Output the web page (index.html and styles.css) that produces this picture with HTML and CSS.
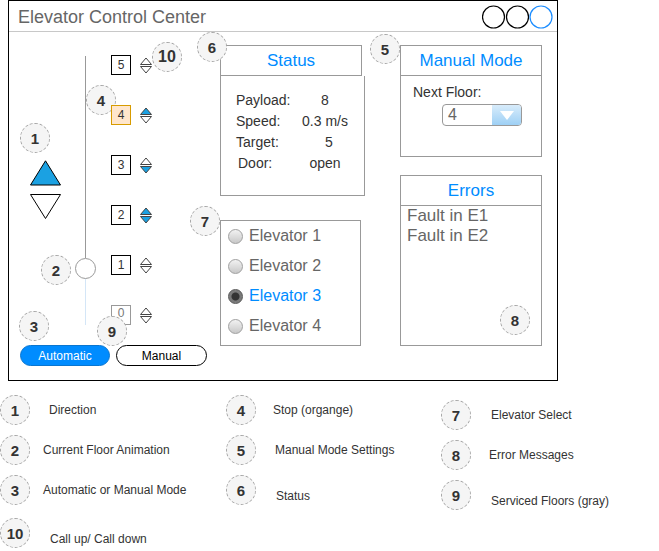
FILE: index.html
```html
<!DOCTYPE html>
<html>
<head>
<meta charset="utf-8">
<link rel="stylesheet" href="styles.css">
</head>
<body>
<div class="window">
  <div class="titlebar">
    <span class="title">Elevator Control Center</span>
    <svg class="winbtns" width="72" height="26" viewBox="0 0 72 26">
      <circle cx="11.5" cy="13" r="11" fill="none" stroke="#000" stroke-width="1.2"/>
      <circle cx="35.5" cy="13" r="11" fill="none" stroke="#000" stroke-width="1.2"/>
      <circle cx="59" cy="13" r="11" fill="none" stroke="#1a8cff" stroke-width="1.2"/>
    </svg>
  </div>
  <div class="content">
    <div class="left">
      <div class="cab">
        <div class="dir">
          <svg width="32" height="26" viewBox="0 0 32 26"><polygon points="15.5,0.8 30.5,25 0.5,25" fill="#1ba1e2" stroke="#000" stroke-width="1"/></svg>
          <svg width="32" height="26" viewBox="0 0 32 26"><polygon points="0.5,0.5 30.5,0.5 15.5,24.5" fill="#fff" stroke="#000" stroke-width="1"/></svg>
        </div>
        <div class="shaft">
          <div class="line-top"></div>
          <div class="pos"></div>
          <div class="line-bottom"></div>
        </div>
        <div class="floors">
          <div class="floor">
            <div class="fnum">5</div>
            <svg class="arr" width="12" height="17" viewBox="0 0 12 17"><polygon points="0.5,7.5 6,1 11.5,7.5" fill="#fff" stroke="#444"/><polygon points="0.5,9.5 11.5,9.5 6,16" fill="#fff" stroke="#444"/></svg>
          </div>
          <div class="floor">
            <div class="fnum stop">4</div>
            <svg class="arr" width="12" height="17" viewBox="0 0 12 17"><polygon points="0.5,7.5 6,1 11.5,7.5" fill="#1ba1e2" stroke="#444"/><polygon points="0.5,9.5 11.5,9.5 6,16" fill="#fff" stroke="#444"/></svg>
          </div>
          <div class="floor">
            <div class="fnum">3</div>
            <svg class="arr" width="12" height="17" viewBox="0 0 12 17"><polygon points="0.5,7.5 6,1 11.5,7.5" fill="#fff" stroke="#444"/><polygon points="0.5,9.5 11.5,9.5 6,16" fill="#1ba1e2" stroke="#444"/></svg>
          </div>
          <div class="floor">
            <div class="fnum">2</div>
            <svg class="arr" width="12" height="17" viewBox="0 0 12 17"><polygon points="0.5,7.5 6,1 11.5,7.5" fill="#1ba1e2" stroke="#444"/><polygon points="0.5,9.5 11.5,9.5 6,16" fill="#1ba1e2" stroke="#444"/></svg>
          </div>
          <div class="floor">
            <div class="fnum">1</div>
            <svg class="arr" width="12" height="17" viewBox="0 0 12 17"><polygon points="0.5,7.5 6,1 11.5,7.5" fill="#fff" stroke="#444"/><polygon points="0.5,9.5 11.5,9.5 6,16" fill="#fff" stroke="#444"/></svg>
          </div>
          <div class="floor">
            <div class="fnum gray">0</div>
            <svg class="arr" width="12" height="17" viewBox="0 0 12 17"><polygon points="0.5,7.5 6,1 11.5,7.5" fill="#fff" stroke="#444"/><polygon points="0.5,9.5 11.5,9.5 6,16" fill="#fff" stroke="#444"/></svg>
          </div>
        </div>
      </div>
      <div class="modes">
        <div class="btn auto">Automatic</div>
        <div class="btn manual">Manual</div>
      </div>
    </div>

    <div class="mid">
      <div class="panel-head">Status</div>
      <div class="status-body">
        <div class="srow"><span class="lbl">Payload:</span><span class="val">8</span></div>
        <div class="srow"><span class="lbl">Speed:</span><span class="val">0.3 m/s</span></div>
        <div class="srow"><span class="lbl">Target:</span><span class="val v-right">5</span></div>
        <div class="srow"><span class="lbl door">Door:</span><span class="val">open</span></div>
      </div>
      <div class="select">
        <div class="radio-row"><span class="radio"></span><span>Elevator 1</span></div>
        <div class="radio-row"><span class="radio"></span><span>Elevator 2</span></div>
        <div class="radio-row on"><span class="radio"></span><span>Elevator 3</span></div>
        <div class="radio-row"><span class="radio"></span><span>Elevator 4</span></div>
      </div>
    </div>

    <div class="right">
      <div class="panel-head">Manual Mode</div>
      <div class="manual-body">
        <div class="nf">Next Floor:</div>
        <div class="dropdown">
          <span class="dd-val">4</span>
          <span class="dd-btn"><svg width="14" height="9" viewBox="0 0 14 9"><polygon points="0,0 14,0 7,9" fill="#fff"/></svg></span>
        </div>
      </div>
      <div class="panel-head errors-head">Errors</div>
      <div class="errors-body">
        <div>Fault in E1</div>
        <div>Fault in E2</div>
      </div>
    </div>

    <div class="badge b1">1</div>
    <div class="badge b4">4</div>
    <div class="badge b10">10</div>
    <div class="badge b6">6</div>
    <div class="badge b5">5</div>
    <div class="badge b7">7</div>
    <div class="badge b2">2</div>
    <div class="badge b3">3</div>
    <div class="badge b9">9</div>
    <div class="badge b8">8</div>
  </div>
</div>

<div class="legend">
  <div class="lcol">
    <div class="litem"><span class="lbadge">1</span><span class="ltext g19">Direction</span></div>
    <div class="litem"><span class="lbadge">2</span><span class="ltext g13">Current Floor Animation</span></div>
    <div class="litem"><span class="lbadge">3</span><span class="ltext g13">Automatic or Manual Mode</span></div>
    <div class="litem r4"><span class="lbadge">10</span><span class="ltext g20 low">Call up/ Call down</span></div>
  </div>
  <div class="lcol">
    <div class="litem"><span class="lbadge">4</span><span class="ltext g17">Stop (organge)</span></div>
    <div class="litem"><span class="lbadge">5</span><span class="ltext g19">Manual Mode Settings</span></div>
    <div class="litem"><span class="lbadge">6</span><span class="ltext g20 low">Status</span></div>
  </div>
  <div class="lcol c3">
    <div class="litem"><span class="lbadge">7</span><span class="ltext g20">Elevator Select</span></div>
    <div class="litem"><span class="lbadge">8</span><span class="ltext g18">Error Messages</span></div>
    <div class="litem"><span class="lbadge">9</span><span class="ltext g20 low">Serviced Floors (gray)</span></div>
  </div>
</div>
</body>
</html>
```

FILE: styles.css
```css
html, body {
  margin: 0;
  padding: 0;
  background: #fff;
}

body {
  width: 659px;
  height: 551px;
  overflow: hidden;
  font-family: "Liberation Sans", Arial, sans-serif;
  color: #333;
}

.window {
  margin-left: 8px;
  width: 550px;
  height: 381px;
  box-sizing: border-box;
  border: 1px solid #000;
  display: flex;
  flex-direction: column;
}

.titlebar {
  height: 31px;
  box-sizing: border-box;
  border-bottom: 1px solid #c8c8c8;
  display: flex;
  align-items: center;
  padding: 0 3px 0 9px;
}

.title {
  font-size: 18px;
  color: #666;
  padding-top: 2px;
}

.winbtns {
  margin-left: auto;
  margin-top: 2px;
}

.content {
  position: relative;
  flex: 1;
  display: flex;
}

/* left column */
.left {
  width: 211px;
  display: flex;
  flex-direction: column;
}

.cab {
  display: flex;
  height: 293px;
}

.dir {
  margin-left: 21px;
  width: 32px;
  padding-top: 128px;
  display: flex;
  flex-direction: column;
  gap: 8px;
}

.dir svg {
  display: block;
}

.shaft {
  margin-left: 13px;
  width: 21px;
  padding-top: 24px;
  display: flex;
  flex-direction: column;
  align-items: center;
}

.line-top {
  width: 1px;
  height: 202px;
  background: #999;
}

.pos {
  width: 21px;
  height: 21px;
  box-sizing: border-box;
  border: 1px solid #999;
  border-radius: 50%;
  background: #fff;
}

.line-bottom {
  width: 1px;
  height: 46px;
  background: #d4e6f7;
}

.floors {
  margin-left: 15px;
  padding-top: 23px;
  display: flex;
  flex-direction: column;
  gap: 30px;
}

.floor {
  display: flex;
  align-items: center;
  gap: 9px;
  height: 20px;
}

.fnum {
  width: 20px;
  height: 20px;
  box-sizing: border-box;
  border: 1px solid #000;
  background: #fff;
  font-size: 12px;
  color: #333;
  display: flex;
  align-items: center;
  justify-content: center;
}

.fnum.stop {
  background: #ffe6cc;
  border-color: #d79b00;
  position: relative;
  z-index: 2;
}

.fnum.gray {
  border-color: #999;
  color: #777;
  align-items: flex-start;
}

.arr {
  display: block;
}

.modes {
  display: flex;
  gap: 6px;
  margin-top: 20px;
  padding-left: 11px;
}

.btn {
  height: 21px;
  box-sizing: border-box;
  border-radius: 11px;
  font-size: 12px;
  display: flex;
  align-items: center;
  justify-content: center;
  position: relative;
  z-index: 3;
}

.btn.auto {
  width: 90px;
  background: #008cff;
  border: 1px solid #0a76d0;
  color: #fff;
}

.btn.manual {
  width: 91px;
  background: #fff;
  border: 1px solid #000;
  color: #000;
}

/* middle column */
.mid {
  width: 145px;
  padding-top: 13px;
  display: flex;
  flex-direction: column;
}

.panel-head {
  width: 142px;
  height: 31px;
  box-sizing: border-box;
  border: 1px solid #999;
  display: flex;
  align-items: center;
  justify-content: center;
  font-size: 17px;
  color: #008cff;
}

.status-body {
  width: 145px;
  height: 120px;
  box-sizing: border-box;
  border: 1px solid #999;
  border-top: none;
  padding: 14px 0 0 15px;
}

.srow {
  display: grid;
  grid-template-columns: 60px 58px;
  height: 21px;
  line-height: 21px;
  font-size: 14px;
  color: #333;
}

.lbl.door {
  padding-left: 2px;
}

.val {
  text-align: center;
}

.val.v-right {
  padding-left: 8px;
}

.select {
  margin-top: 24px;
  width: 141px;
  height: 126px;
  box-sizing: border-box;
  border: 1px solid #999;
  padding-left: 7px;
}

.radio-row {
  height: 30px;
  display: flex;
  align-items: center;
  gap: 6px;
  font-size: 16px;
  color: #666;
}

.radio-row.on {
  color: #008cff;
}

.radio {
  width: 15px;
  height: 15px;
  box-sizing: border-box;
  border-radius: 50%;
  border: 1px solid #a0a0a0;
  background: linear-gradient(#f2f2f2, #c8c8c8);
}

.radio-row.on .radio {
  border: 1px solid #555;
  background: radial-gradient(circle, #333 0 3.5px, #777 4.5px, #888 100%);
}

/* right column */
.right {
  width: 142px;
  margin-left: 35px;
  padding-top: 13px;
  display: flex;
  flex-direction: column;
}

.manual-body {
  width: 142px;
  height: 81px;
  box-sizing: border-box;
  border: 1px solid #999;
  border-top: none;
  padding: 8px 0 0 12px;
}

.nf {
  font-size: 14px;
  line-height: 16px;
  color: #333;
}

.dropdown {
  margin: 4px 0 0 29px;
  width: 80px;
  height: 22px;
  box-sizing: border-box;
  border: 1px solid #999;
  border-radius: 4px;
  display: flex;
  overflow: hidden;
}

.dd-val {
  flex: 1;
  font-size: 16px;
  color: #666;
  padding-left: 5px;
  line-height: 20px;
}

.dd-btn {
  width: 29px;
  background: linear-gradient(#d8ecfb, #9ed0f5);
  display: flex;
  align-items: center;
  justify-content: center;
}

.dd-btn svg {
  display: block;
}

.errors-head {
  margin-top: 18px;
}

.errors-body {
  width: 142px;
  height: 140px;
  box-sizing: border-box;
  border: 1px solid #999;
  border-top: none;
  padding-left: 6px;
  font-size: 17px;
  line-height: 20px;
  color: #666;
}

/* callout badges overlaying the mockup */
.badge,
.lbadge {
  width: 30px;
  height: 30px;
  box-sizing: border-box;
  border: 1px dashed #a6a6a6;
  border-radius: 50%;
  background: #f5f5f5;
  display: flex;
  align-items: center;
  justify-content: center;
  font-weight: bold;
  font-size: 15px;
  color: #333;
}

.badge {
  position: absolute;
  z-index: 1;
}

.b1 { left: 11px; top: 91px; }
.b4 { left: 77px; top: 53px; }
.b10 { left: 143px; top: 10px; font-size: 16px; }
.b6 { left: 188px; top: 0; }
.b5 { left: 361px; top: 2px; }
.b7 { left: 181px; top: 174px; }
.b2 { left: 32px; top: 223px; }
.b3 { left: 10px; top: 279px; }
.b9 { left: 88px; top: 284px; }
.b8 { left: 491px; top: 273px; }

/* legend */
.legend {
  display: grid;
  grid-template-columns: 226px 215px 1fr;
  padding-top: 14px;
}

.lcol {
  display: flex;
  flex-direction: column;
  gap: 10px;
}

.lcol.c3 {
  padding-top: 5px;
}

.litem {
  display: flex;
  align-items: center;
  height: 30px;
}

.litem.r4 {
  margin-top: 3px;
}

.lbadge {
  flex: none;
  font-size: 15px;
}

.ltext {
  font-size: 12px;
  color: #333;
}

.ltext.low {
  margin-top: 12px;
}

.g13 { margin-left: 13px; }
.g17 { margin-left: 17px; }
.g18 { margin-left: 18px; }
.g19 { margin-left: 19px; }
.g20 { margin-left: 20px; }
```
